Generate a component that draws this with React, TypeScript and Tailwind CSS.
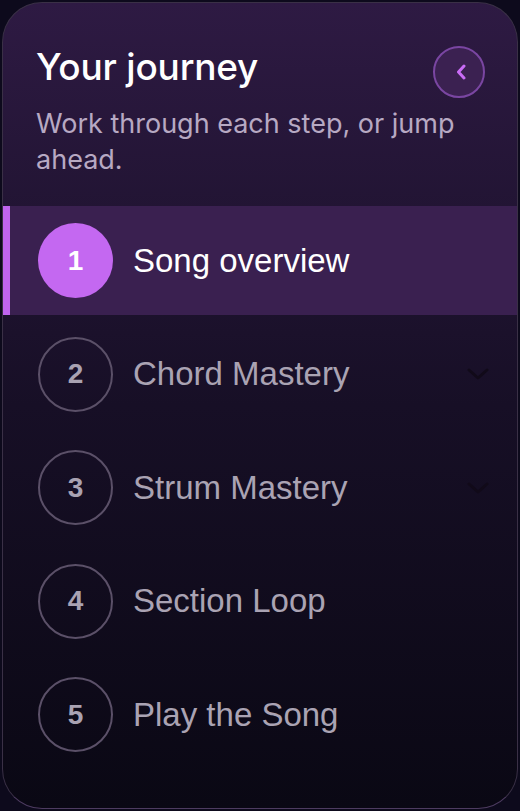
import React from 'react';

type Step = { n: number; label: string; expandable?: boolean };

const steps: Step[] = [
    { n: 1, label: 'Song overview' },
    { n: 2, label: 'Chord Mastery', expandable: true },
    { n: 3, label: 'Strum Mastery', expandable: true },
    { n: 4, label: 'Section Loop' },
    { n: 5, label: 'Play the Song' },
];

const ChevronDown: React.FC = () => (
    <svg width="22" height="12" viewBox="0 0 22 12" fill="none">
        <path d="M2 2l9 8 9-8" stroke="#110a19" strokeWidth="3" strokeLinecap="round" strokeLinejoin="round" />
    </svg>
);

const App: React.FC = () => {
    const active = 1;

    return (
        <div className="w-[520px] h-[811px] bg-[#0d0a1c] p-[2px]">
            <div className="h-full rounded-[40px] border border-[#3a3046] border-b-[#4d3b60] bg-gradient-to-b from-[#2e1a43] via-[#170f26] to-[#0a0814] overflow-hidden">
                <div className="pl-[33px] pr-[32px] pt-[42px]">
                    <div className="flex items-start justify-between">
                        <h2 className="font-['Inter',sans-serif] text-[37px] leading-[44px] font-medium text-white tracking-[-0.2px]">
                            Your journey
                        </h2>
                        <button className="w-[52px] h-[52px] rounded-full border-2 border-[#7a46a2] bg-[#3b2151] flex items-center justify-center mt-[1px]">
                            <svg width="12" height="16" viewBox="0 0 12 16" fill="none" className="ml-[4px]">
                                <path d="M9 2L3.5 8 9 14" stroke="#c96cf6" strokeWidth="3" strokeLinecap="round" strokeLinejoin="round" />
                            </svg>
                        </button>
                    </div>
                    <p className="font-['Inter',sans-serif] mt-[8px] text-[27px] leading-[36px] text-[#b7a9c3]">
                        Work through each step, or jump ahead.
                    </p>
                </div>

                <div className="mt-[28px] flex flex-col gap-[4.5px] font-['Liberation_Sans',Arial,sans-serif]">
                    {steps.map((s) => {
                        const isActive = s.n === active;
                        return (
                            <div
                                key={s.n}
                                className={`h-[109px] flex items-center pl-[28px] pr-[28px] border-l-[7px] ${
                                    isActive ? 'border-[#c064ef] bg-[#3a2050]' : 'border-transparent'
                                }`}
                            >
                                <div
                                    className={`w-[75px] h-[75px] shrink-0 rounded-full flex items-center justify-center text-[28px] font-bold ${
                                        isActive ? 'bg-[#c468f1] text-white' : 'border-2 border-[#5b5068] text-[#a9a2b2]'
                                    }`}
                                >
                                    {s.n}
                                </div>
                                <span className={`ml-[20px] flex-1 text-[33px] ${isActive ? 'text-white' : 'text-[#aaa3b3]'}`}>
                                    {s.label}
                                </span>
                                {s.expandable && <ChevronDown />}
                            </div>
                        );
                    })}
                </div>
            </div>
        </div>
    );
};

export default App;
